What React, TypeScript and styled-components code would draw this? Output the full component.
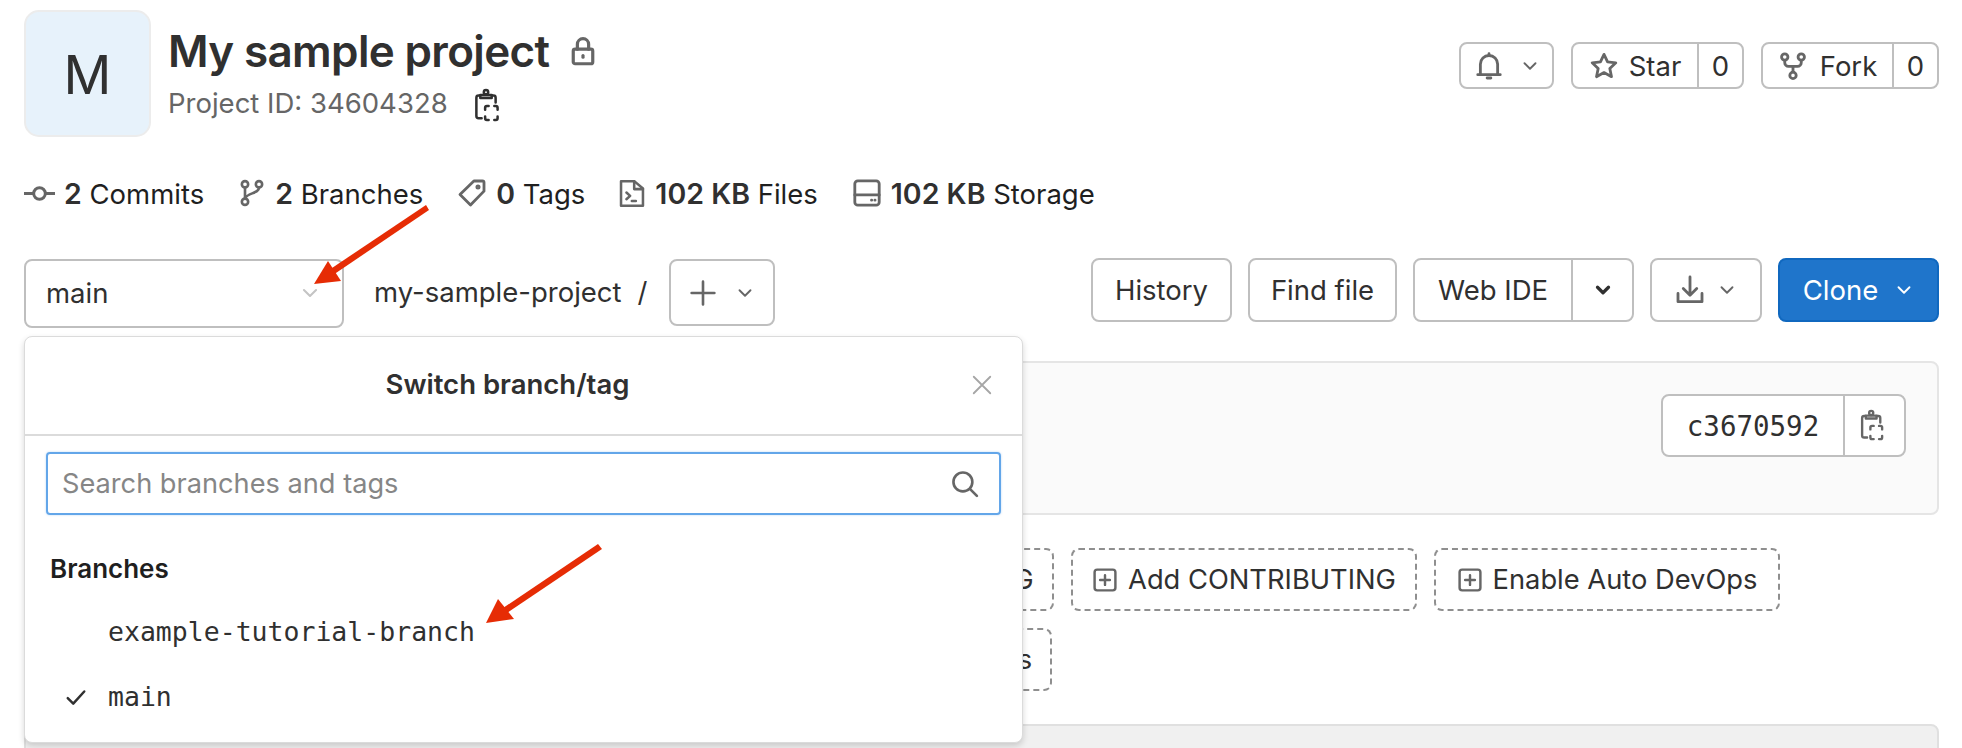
import React from "react";
import styled, { createGlobalStyle } from "styled-components";

const GlobalStyle = createGlobalStyle`
  html, body {
    margin: 0;
    padding: 0;
    background: #fff;
  }
  * {
    box-sizing: border-box;
  }
`;

const Page = styled.div`
  position: relative;
  width: 1962px;
  height: 748px;
  overflow: hidden;
  padding: 10px 23px 0 24px;
  color: #303030;
  font-family: Inter, "Liberation Sans", sans-serif;
  font-size: 27.5px;
`;

const Header = styled.div`
  display: flex;
  justify-content: space-between;
  align-items: flex-start;
  height: 127px;
`;

const Identity = styled.div`
  display: flex;
  gap: 17px;
`;

const Avatar = styled.div`
  width: 127px;
  height: 127px;
  display: flex;
  align-items: center;
  justify-content: center;
  padding-top: 2px;
  background: #e7f2fb;
  border: 2px solid #ececec;
  border-radius: 15px;
  font-size: 53px;
  color: #303030;
`;

const TitleBlock = styled.div`
  display: flex;
  flex-direction: column;
  padding-top: 12px;
`;

const TitleRow = styled.div`
  display: flex;
  align-items: center;
  gap: 19px;
  height: 58px;
`;

const Title = styled.h1`
  margin: 0;
  font-size: 44px;
  font-weight: 600;
  letter-spacing: -0.65px;
  color: #303030;
`;

const MetaRow = styled.div`
  display: flex;
  align-items: center;
  gap: 24px;
  height: 46px;
  color: #666;
`;

const CopyMark = styled.span`
  display: flex;
  margin-top: 4px;
`;

const HeaderActions = styled.div`
  display: flex;
  gap: 17px;
  padding-top: 32px;
`;

const Group = styled.div<{ $height?: number }>`
  display: flex;
  align-items: stretch;
  height: ${(p) => p.$height ?? 47}px;
  background: #fff;
  border: 2px solid #bfbfbf;
  border-radius: 8px;
`;

const GroupCell = styled.div<{ $width: number; $divided?: boolean; $gap?: number }>`
  display: flex;
  align-items: center;
  justify-content: center;
  gap: ${(p) => p.$gap ?? 10}px;
  width: ${(p) => p.$width}px;
  border-left: ${(p) => (p.$divided ? "2px solid #bfbfbf" : "none")};
`;

const Stats = styled.div`
  display: flex;
  gap: 34px;
  align-items: center;
  height: 36px;
  margin-top: 38px;
`;

const Stat = styled.div`
  display: flex;
  align-items: center;
  gap: 9px;
  color: #1f1f1f;
  b {
    font-size: 28.5px;
    font-weight: 600;
    color: #303030;
  }
`;

const Toolbar = styled.div`
  display: flex;
  justify-content: space-between;
  align-items: flex-start;
  height: 69px;
  margin-top: 47px;
`;

const ToolbarLeft = styled.div`
  display: flex;
  align-items: flex-start;
  padding-top: 1px;
`;

const BranchAnchor = styled.div`
  position: relative;
`;

const BranchSelect = styled.div`
  display: flex;
  align-items: center;
  justify-content: space-between;
  width: 320px;
  height: 69px;
  padding: 0 21px 2px 20px;
  border: 2px solid #bfbfbf;
  border-radius: 8px;
`;

const PathText = styled.div`
  display: flex;
  align-items: center;
  gap: 16px;
  height: 66px;
  margin: 0 22px 0 30px;
`;

const AddButton = styled.div`
  display: flex;
  align-items: center;
  justify-content: center;
  gap: 18px;
  width: 106px;
  height: 67px;
  border: 2px solid #bfbfbf;
  border-radius: 8px;
`;

const ToolbarRight = styled.div`
  display: flex;
  gap: 16px;
`;

const PlainButton = styled.div<{ $width: number; $gap?: number }>`
  display: flex;
  align-items: center;
  justify-content: center;
  gap: ${(p) => p.$gap ?? 12}px;
  width: ${(p) => p.$width}px;
  height: 64px;
  border: 2px solid #bfbfbf;
  border-radius: 8px;
`;

const CloneButton = styled(PlainButton)`
  background: #1f75cb;
  border-color: #1068bf;
  color: #fff;
`;

const CommitPanel = styled.div`
  display: flex;
  justify-content: flex-end;
  height: 154px;
  margin-top: 34px;
  padding: 31px 31px 0 0;
  background: #fafafa;
  border: 2px solid #e5e5e5;
  border-radius: 8px;
`;

const CommitSha = styled.span`
  font-family: "DejaVu Sans Mono", "Liberation Mono", monospace;
  font-size: 27.5px;
`;

const DashedStack = styled.div`
  display: flex;
  flex-direction: column;
  gap: 17px;
  margin-top: 33px;
`;

const DashedRow = styled.div<{ $indent: number }>`
  display: flex;
  gap: 17px;
  margin-left: ${(p) => p.$indent}px;
`;

const DashedButton = styled.div<{ $width: number }>`
  display: flex;
  align-items: center;
  justify-content: center;
  gap: 10px;
  flex: none;
  width: ${(p) => p.$width}px;
  height: 63px;
  border: 2px dashed #8f8f8f;
  border-radius: 8px;
  white-space: nowrap;
  font-size: 27.3px;
`;

const BottomPanel = styled.div`
  height: 60px;
  margin-top: 33px;
  background: #f0f0f0;
  border: 2px solid #e0e0e0;
  border-radius: 8px;
`;

const Dropdown = styled.div`
  position: absolute;
  top: 77px;
  left: 0;
  z-index: 2;
  width: 999px;
  height: 407px;
  background: #fff;
  border: 1px solid #dbdbdb;
  border-radius: 8px;
  box-shadow: 0 3px 6px rgba(0, 0, 0, 0.16);
`;

const DropdownHeader = styled.div`
  position: relative;
  display: flex;
  align-items: center;
  justify-content: center;
  height: 99px;
  padding: 0 32px 3px 0;
  border-bottom: 2px solid #dbdbdb;
  font-weight: 600;
`;

const CloseIcon = styled.span`
  position: absolute;
  right: 28px;
  top: 36px;
  display: flex;
`;

const SearchBox = styled.div`
  display: flex;
  align-items: center;
  justify-content: space-between;
  height: 63px;
  margin: 16px 21px 0 21px;
  padding: 0 20px 0 14px;
  border: 2px solid #63a6e9;
  border-radius: 4px;
  color: #868686;
  font-size: 27.2px;
  box-shadow: 0 0 2px rgba(99, 166, 233, 0.5);
`;

const SectionLabel = styled.div`
  margin: 38px 0 0 25px;
  height: 32px;
  line-height: 32px;
  font-weight: 600;
  font-size: 26px;
  color: #1f1f1f;
`;

const BranchList = styled.div`
  margin-top: 14px;
`;

const BranchRow = styled.div`
  display: flex;
  align-items: center;
  height: 65px;
  padding-left: 36px;
  font-family: "DejaVu Sans Mono", "Liberation Mono", monospace;
  font-size: 26.5px;
`;

const CheckSlot = styled.span`
  display: flex;
  width: 47px;
  padding-left: 4px;
`;

const ArrowLayer = styled.svg`
  position: absolute;
  inset: 0;
  z-index: 3;
  pointer-events: none;
`;

type IconName =
  | "lock" | "clipboard" | "bell" | "chevron" | "star" | "fork" | "branch" | "commit" | "tag"
  | "file" | "storage" | "plus" | "download" | "close" | "search" | "check" | "addbox";

const icons: Record<IconName, React.ReactNode> = {
  lock: (
    <>
      <rect x="2.8" y="7" width="10.4" height="7.8" rx="1" />
      <path d="M5 7V4.4a3 3 0 0 1 6 0V7" />
      <path d="M8 10.4v.9" />
    </>
  ),
  clipboard: (
    <>
      <path d="M3.6 3.4H3a1 1 0 0 0-1 1v8.4a1 1 0 0 0 1 1h1.4" />
      <path d="M9.2 3.4h.6a1 1 0 0 1 1 1v2.2" />
      <circle cx="6.4" cy="1.9" r="1" />
      <path d="M3.8 4.6h5.2V3.2H3.8z" />
      <path d="M6 9.9V9a.8.8 0 0 1 .8-.8h.8M10.2 8.2h.7a.8.8 0 0 1 .8.8v.9M11.7 13v.8a.8.8 0 0 1-.8.8h-.7M7.6 14.6h-.8a.8.8 0 0 1-.8-.8V13" />
    </>
  ),
  bell: (
    <>
      <path d="M2 12.6h12M3.4 12.6V7a4.6 4.6 0 0 1 9.2 0v5.6" />
      <path d="M8 1.4v1M7 14.4h2" />
    </>
  ),
  chevron: <path d="M3.6 5.8 8 10.2l4.4-4.4" />,
  star: <path d="M8 1.8l1.9 4 4.4.5-3.2 3 .9 4.4L8 11.5l-4 2.2.9-4.4-3.2-3 4.4-.5z" />,
  fork: (
    <>
      <circle cx="3.6" cy="3.2" r="1.7" />
      <circle cx="12.4" cy="3.2" r="1.7" />
      <circle cx="8" cy="13" r="1.7" />
      <path d="M3.6 5v1.2a2 2 0 0 0 2 2h4.8a2 2 0 0 0 2-2V5M8 8.2v3" />
    </>
  ),
  branch: (
    <>
      <circle cx="4" cy="3" r="1.8" />
      <circle cx="12" cy="3" r="1.8" />
      <circle cx="4" cy="13" r="1.8" />
      <path d="M4 4.8v6.4M12 4.8c0 3.6-6.5 3-8 6.2" />
    </>
  ),
  commit: (
    <>
      <circle cx="8" cy="8" r="3" />
      <path d="M0 8h5M11 8h5" />
    </>
  ),
  tag: (
    <>
      <path d="M9 1.6h4.6a.8.8 0 0 1 .8.8V7L7.2 14.4 1.6 8.8z" />
      <circle cx="11.2" cy="4.8" r=".6" />
    </>
  ),
  file: (
    <>
      <path d="M1.2.8h8l5 4.2v10.2h-13z" />
      <path d="M9 .8v4.6h5.2M4.4 7.4l2.2 2-2.2 2M7.6 12.4h2.4" />
    </>
  ),
  storage: (
    <>
      <rect x="1.5" y="1.5" width="13" height="13" rx="1.6" />
      <path d="M1.5 9h13M10.4 11.8h.1M12.2 11.8h.1" />
    </>
  ),
  plus: <path d="M8 1.5v13M1.5 8h13" />,
  download: (
    <>
      <path d="M8 1v9.6M4.4 7.2 8 10.8l3.6-3.6" />
      <path d="M1.6 9.8v4.4h12.8V9.8" />
    </>
  ),
  close: <path d="M2.5 2.5l11 11M13.5 2.5l-11 11" />,
  search: (
    <>
      <circle cx="6.8" cy="6.8" r="5.4" />
      <path d="M10.8 10.8l4 4" />
    </>
  ),
  check: <path d="M2 8.8l4 4L14 4" />,
  addbox: (
    <>
      <rect x="1.6" y="1.6" width="12.8" height="12.8" rx="1.6" />
      <path d="M8 5v6M5 8h6" />
    </>
  ),
};

const Icon = ({
  name,
  size = 24,
  color = "#666",
  weight = 1.5,
}: {
  name: IconName;
  size?: number;
  color?: string;
  weight?: number;
}) => (
  <svg
    width={size}
    height={size}
    viewBox="0 0 16 16"
    fill="none"
    stroke={color}
    strokeWidth={weight}
    strokeLinecap="round"
    strokeLinejoin="round"
    style={{ flex: "none" }}
  >
    {icons[name]}
  </svg>
);

export default function App() {
  return (
    <Page>
      <GlobalStyle />
      <Header>
        <Identity>
          <Avatar>M</Avatar>
          <TitleBlock>
            <TitleRow>
              <Title>My sample project</Title>
              <Icon name="lock" size={30} weight={1.7} />
            </TitleRow>
            <MetaRow>
              Project ID: 34604328
              <CopyMark><Icon name="clipboard" size={35} color="#303030" weight={1.15} /></CopyMark>
            </MetaRow>
          </TitleBlock>
        </Identity>
        <HeaderActions>
          <Group>
            <GroupCell $width={91} $gap={16}>
              <Icon name="bell" size={30} />
              <Icon name="chevron" size={20} />
            </GroupCell>
          </Group>
          <Group>
            <GroupCell $width={124}>
              <Icon name="star" size={30} />
              Star
            </GroupCell>
            <GroupCell $width={45} $divided>0</GroupCell>
          </Group>
          <Group>
            <GroupCell $width={129} $gap={12}>
              <Icon name="fork" size={30} />
              Fork
            </GroupCell>
            <GroupCell $width={45} $divided>0</GroupCell>
          </Group>
        </HeaderActions>
      </Header>

      <Stats>
        <Stat><Icon name="commit" size={31} /><span><b>2</b> Commits</span></Stat>
        <Stat><Icon name="branch" size={28} /><span><b>2</b> Branches</span></Stat>
        <Stat><Icon name="tag" size={30} /><span><b>0</b> Tags</span></Stat>
        <Stat><Icon name="file" size={27} /><span><b>102 KB</b> Files</span></Stat>
        <Stat><Icon name="storage" size={30} /><span><b>102 KB</b> Storage</span></Stat>
      </Stats>

      <Toolbar>
        <ToolbarLeft>
          <BranchAnchor>
            <BranchSelect>
              main
              <Icon name="chevron" size={22} color="#c4c4c4" />
            </BranchSelect>
            <Dropdown>
              <DropdownHeader>
                Switch branch/tag
                <CloseIcon><Icon name="close" size={24} color="#a6a6a6" weight={1.2} /></CloseIcon>
              </DropdownHeader>
              <SearchBox>
                Search branches and tags
                <Icon name="search" size={28} />
              </SearchBox>
              <SectionLabel>Branches</SectionLabel>
              <BranchList>
                <BranchRow>
                  <CheckSlot />
                  example-tutorial-branch
                </BranchRow>
                <BranchRow>
                  <CheckSlot><Icon name="check" size={22} color="#303030" weight={1.8} /></CheckSlot>
                  main
                </BranchRow>
              </BranchList>
            </Dropdown>
          </BranchAnchor>
          <PathText>
            my-sample-project
            <span>/</span>
          </PathText>
          <AddButton>
            <Icon name="plus" size={28} />
            <Icon name="chevron" size={20} />
          </AddButton>
        </ToolbarLeft>
        <ToolbarRight>
          <PlainButton $width={141}>History</PlainButton>
          <PlainButton $width={149}>Find file</PlainButton>
          <Group $height={64}>
            <GroupCell $width={156}>Web IDE</GroupCell>
            <GroupCell $width={61} $divided>
              <Icon name="chevron" size={20} color="#303030" weight={2.6} />
            </GroupCell>
          </Group>
          <PlainButton $width={112}>
            <Icon name="download" size={30} />
            <Icon name="chevron" size={20} />
          </PlainButton>
          <CloneButton $width={161} $gap={16}>
            Clone
            <Icon name="chevron" size={20} color="#fff" />
          </CloneButton>
        </ToolbarRight>
      </Toolbar>

      <CommitPanel>
        <Group $height={63}>
          <GroupCell $width={180}><CommitSha>c3670592</CommitSha></GroupCell>
          <GroupCell $width={61} $divided>
            <Icon name="clipboard" size={33} weight={1.15} />
          </GroupCell>
        </Group>
      </CommitPanel>

      <DashedStack>
        <DashedRow $indent={721}>
          <DashedButton $width={309}><Icon name="addbox" size={26} />Add CHANGELOG</DashedButton>
          <DashedButton $width={346}><Icon name="addbox" size={26} />Add CONTRIBUTING</DashedButton>
          <DashedButton $width={346}><Icon name="addbox" size={26} />Enable Auto DevOps</DashedButton>
        </DashedRow>
        <DashedRow $indent={664}>
          <DashedButton $width={364}><Icon name="addbox" size={26} />Configure Integrations</DashedButton>
        </DashedRow>
      </DashedStack>

      <BottomPanel />

      <ArrowLayer width="1962" height="748" viewBox="0 0 1962 748">
        <g fill="#e62c05" stroke="none">
          <path d="M426 205 L429 210 L333 275 L329 270 Z" />
          <path d="M314 284 L328 261 L341 281 Z" />
          <path d="M598 544 L602 549 L507 613 L503 608 Z" />
          <path d="M486 623 L498 599 L514 619 Z" />
        </g>
      </ArrowLayer>
    </Page>
  );
}
